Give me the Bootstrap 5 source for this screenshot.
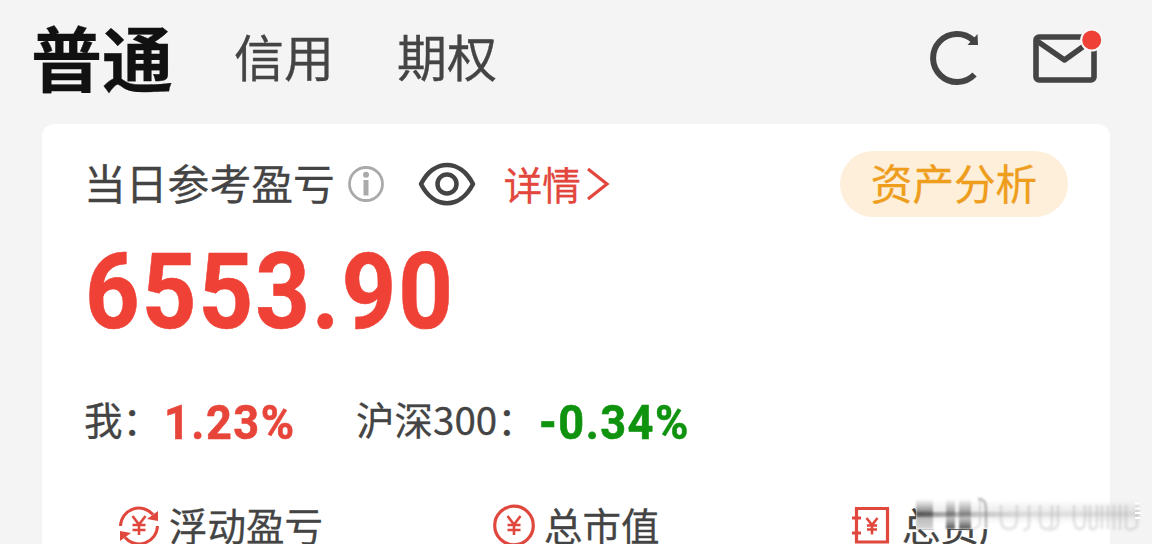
<!DOCTYPE html>
<html lang="zh-CN">
<head>
  <meta charset="UTF-8" />
  <meta name="viewport" content="width=device-width, initial-scale=1.0" />
  <title>普通账户</title>
  <link rel="stylesheet" href="https://cdn.jsdelivr.net/npm/bootstrap@5.3.0/dist/css/bootstrap.min.css">
  <style>
    body {
      width: 1152px;
      height: 544px;
      background: #f4f4f4;
      color: #444;
      font-family: "Noto Sans CJK SC", sans-serif;
      line-height: 1;
      white-space: nowrap;
      -webkit-text-stroke: .3px currentColor;
    }
    svg { display: block; flex: none; }

    .topbar { height: 124px; padding: 0 50px 6px 31px; }
    .tab-active { padding-bottom: 8px; font-size: 71px; font-weight: 700; color: #111; }
    .tab-item { padding-bottom: 8px; font-size: 50px; }
    .tab-first { margin-left: 61px; }
    .tab-second { margin-left: 63px; }
    .mail-icon { margin-left: 50px; }

    .asset-panel {
      width: 1068px;
      height: 440px;
      margin-left: 42px;
      padding: 27px 42px 0 42px;
      background: #fff;
      border-radius: 12px;
    }
    .head-row { height: 66px; }
    .head-label { padding-bottom: 2px; font-size: 41.8px; }
    .info-icon { margin-left: 12px; }
    .eye-icon { margin-left: 33px; }
    .detail-link { margin-left: 28px; font-size: 38.5px; color: #e2463c; }
    .detail-link span { padding-bottom: 2px; }
    .analysis-btn {
      width: 228px;
      height: 66px;
      font-size: 41.6px;
      line-height: 1;
      color: #ee9d1c;
      background: #fdefd9;
    }
    .analysis-btn span { display: block; padding-bottom: 2px; }
    .analysis-btn:hover { color: #ee9d1c; background: #fdefd9; }

    .num {
      font-family: Roboto, "Liberation Sans", sans-serif;
      font-weight: 700;
      -webkit-text-stroke: .6px currentColor;
      transform: scaleX(.9);
      transform-origin: left;
    }
    .total-num { height: 106px; margin: 22px 0 0 1px; font-size: 106px; letter-spacing: 2.2px; color: #ef4136; }
    .rate-row { height: 50px; margin-top: 51px; font-size: 38.5px; }
    .rate-label { padding-bottom: 5px; }
    .colon { margin-right: 3px; }
    .rate-num { padding-top: 5px; font-size: 48.5px; letter-spacing: 1.6px; transform: scaleX(.93); }
    .up { width: 146px; color: #e8453a; }
    .down { color: #0f930f; }
    .index-label { margin-left: 46px; }

    .stats-row { height: 50px; margin: 54px 0 0 33px; font-size: 38.5px; }
    .stats-row span { padding-bottom: 2px; }
    .stat-a { width: 375px; }
    .stat-b { width: 358px; }
    .smear { left: 892px; top: 488px; }
  </style>
</head>
<body class="position-relative overflow-hidden m-0">

  <!-- Account tabs -->
  <header class="topbar d-flex align-items-center">
    <span class="tab-active">普通</span>
    <span class="tab-item tab-first">信用</span>
    <span class="tab-item tab-second">期权</span>
    <svg class="ms-auto" width="54" height="60" viewBox="0 0 54 60" fill="none">
      <path d="M47.500 45.500A24 24 0 1 1 46.500 11.500" stroke="#444" stroke-width="6"/>
      <path d="M50.500 5L51 16H40.500Z" fill="#444"/>
    </svg>
    <svg class="mail-icon" width="71" height="60" viewBox="0 0 71 60" fill="none">
      <rect x="5" y="8" width="58" height="43" rx="3" stroke="#444" stroke-width="5.600"/>
      <path d="M6 12L33.500 31L60 12" stroke="#444" stroke-width="5.600" stroke-linejoin="round"/>
      <circle cx="60.700" cy="11" r="10.500" fill="#ef4136" stroke="#f9f9f9" stroke-width="2"/>
    </svg>
  </header>

  <!-- Daily profit panel -->
  <main class="asset-panel">
    <div class="head-row d-flex align-items-center">
      <span class="head-label">当日参考盈亏</span>
      <svg class="info-icon" width="38" height="38" viewBox="0 0 38 38" fill="none">
        <circle cx="19" cy="19" r="16.500" stroke="#aaa" stroke-width="2.800"/>
        <circle cx="19" cy="9.700" r="3" fill="#aaa"/>
        <path d="M19 15V30.500" stroke="#aaa" stroke-width="5"/>
      </svg>
      <svg class="eye-icon" width="58" height="44" viewBox="0 0 58 44" fill="none">
        <path d="M3 22C16-3.500 42-3.500 55 22C42 47.500 16 47.500 3 22Z" stroke="#444" stroke-width="4.500" stroke-linejoin="round"/>
        <circle cx="29" cy="22" r="9.500" stroke="#444" stroke-width="4.500"/>
      </svg>
      <a class="detail-link d-flex align-items-center text-decoration-none" href="#">
        <span>详情</span>
        <svg class="ms-1" width="26" height="36" viewBox="0 0 26 36" fill="none">
          <path d="M3 3L22 18L3 33" stroke="#e2463c" stroke-width="3.200"/>
        </svg>
      </a>
      <button class="analysis-btn btn rounded-pill border-0 p-0 ms-auto" type="button"><span>资产分析</span></button>
    </div>

    <div class="total-num num">6553.90</div>

    <div class="rate-row d-flex align-items-center">
      <span class="rate-label">我<span class="colon">：</span></span>
      <span class="rate-num num up">1.23%</span>
      <span class="rate-label index-label">沪深300<span class="colon">：</span></span>
      <span class="rate-num num down">-0.34%</span>
    </div>

    <div class="stats-row d-flex align-items-center">
      <div class="stat-a d-flex align-items-center">
        <svg width="44" height="44" viewBox="0 0 44 44" fill="none" stroke="#e0483e" stroke-width="3">
          <path d="M3.500 23A18.500 18.500 0 0 1 36 11.500M40.500 23A18.500 18.500 0 0 1 8 34.500"/>
          <path d="M41 8V18L30 16ZM3 38V28L14 30Z" fill="#e0483e" stroke="none"/>
          <path d="M15.500 13L22 21.500L28.500 13M22 21V32M15.500 22H28.500M15.500 27H28.500" stroke-width="2.600"/>
        </svg>
        <span class="ms-2">浮动盈亏</span>
      </div>
      <div class="stat-b d-flex align-items-center">
        <svg width="44" height="44" viewBox="0 0 44 44" fill="none" stroke="#e0483e" stroke-width="3.200">
          <circle cx="22" cy="22.500" r="19.300"/>
          <path d="M15.500 13L22 21.500L28.500 13M22 21V32M15.500 22H28.500M15.500 27H28.500" stroke-width="2.600"/>
        </svg>
        <span class="ms-2">总市值</span>
      </div>
      <div class="d-flex align-items-center">
        <svg width="44" height="44" viewBox="0 0 44 44" fill="none" stroke="#e0483e" stroke-width="3.200">
          <path d="M6.500 5.500H37.500V39H6.500ZM2 15H11M2 30H11"/>
          <path d="M16.500 15L22 22L27.500 15M22 22V31.500M17 22.500H27M17 26.500H27" stroke-width="2.600"/>
        </svg>
        <span class="ms-2">总资产</span>
      </div>
    </div>
  </main>

  <!-- Smudged strip over the last stat -->
  <svg class="smear position-absolute" width="260" height="56" viewBox="0 0 260 56" fill="none">
    <defs>
      <linearGradient id="bar" x1="0" y1="0" x2="0" y2="1">
        <stop offset="0" stop-color="#555" stop-opacity="0"/>
        <stop offset=".5" stop-color="#444" stop-opacity=".6"/>
        <stop offset=".62" stop-color="#666" stop-opacity=".35"/>
        <stop offset="1" stop-color="#333" stop-opacity=".85"/>
      </linearGradient>
      <linearGradient id="barFirst" x1="0" y1="0" x2="0" y2="1">
        <stop offset="0" stop-color="#555" stop-opacity="0"/>
        <stop offset=".5" stop-color="#333" stop-opacity=".7"/>
        <stop offset=".65" stop-color="#888" stop-opacity=".55"/>
        <stop offset="1" stop-color="#888" stop-opacity=".35"/>
      </linearGradient>
      <linearGradient id="band" x1="0" y1="0" x2="1" y2="0">
        <stop offset="0" stop-color="#333" stop-opacity=".5"/>
        <stop offset=".3" stop-color="#777" stop-opacity=".3"/>
        <stop offset=".5" stop-color="#999" stop-opacity=".15"/>
        <stop offset="1" stop-color="#999" stop-opacity=".12"/>
      </linearGradient>
      <linearGradient id="fade" x1="0" y1="0" x2="0" y2="1">
        <stop offset="0" stop-color="#999" stop-opacity="0"/>
        <stop offset=".6" stop-color="#999" stop-opacity=".22"/>
        <stop offset="1" stop-color="#999" stop-opacity=".04"/>
      </linearGradient>
      <filter id="soft" x="-10%" y="-10%" width="120%" height="120%"><feGaussianBlur stdDeviation=".9"/></filter>
    </defs>
    <rect x="24" y="10" width="194" height="31" fill="#fff"/>
    <g filter="url(#soft)">
      <rect x="24" y="11" width="17" height="30" fill="url(#barFirst)"/>
      <rect x="54" y="11" width="9" height="30" fill="url(#bar)"/>
      <rect x="67" y="11" width="12" height="30" fill="url(#bar)"/>
      <rect x="40" y="12" width="208" height="22" fill="url(#fade)"/>
      <rect x="24" y="24" width="224" height="5" fill="url(#band)"/>
      <path d="M86 11Q94 10 94 22V40" stroke="#777" stroke-opacity=".5" stroke-width="2.500"/>
      <path d="M88 12V36Q84 42 74 42" stroke="#aaa" stroke-opacity=".4" stroke-width="2"/>
      <path d="M109 17V30Q109 41 117 41Q125 41 125 30V17M137 17V38Q136 42 131 42M148 17V30Q148 41 154 41Q160 41 160 34V17M166 17V36Q164 42 156 42" stroke="#aaa" stroke-opacity=".3" stroke-width="3"/>
      <path d="M182 17V30Q182 41 188 41Q193 41 193 30V17M198 17V40Q202 43 205 38V17M210 17V41M216 17V41M222 17V42M228 17V42M234 17V40Q239 44 245 38V17" stroke="#aaa" stroke-opacity=".3" stroke-width="3"/>
    </g>
    <path d="M243 15.500H248M243 20.500H248M243 25H249M243 30H248" stroke="#fff" stroke-width="2"/>
  </svg>
</body>
</html>
